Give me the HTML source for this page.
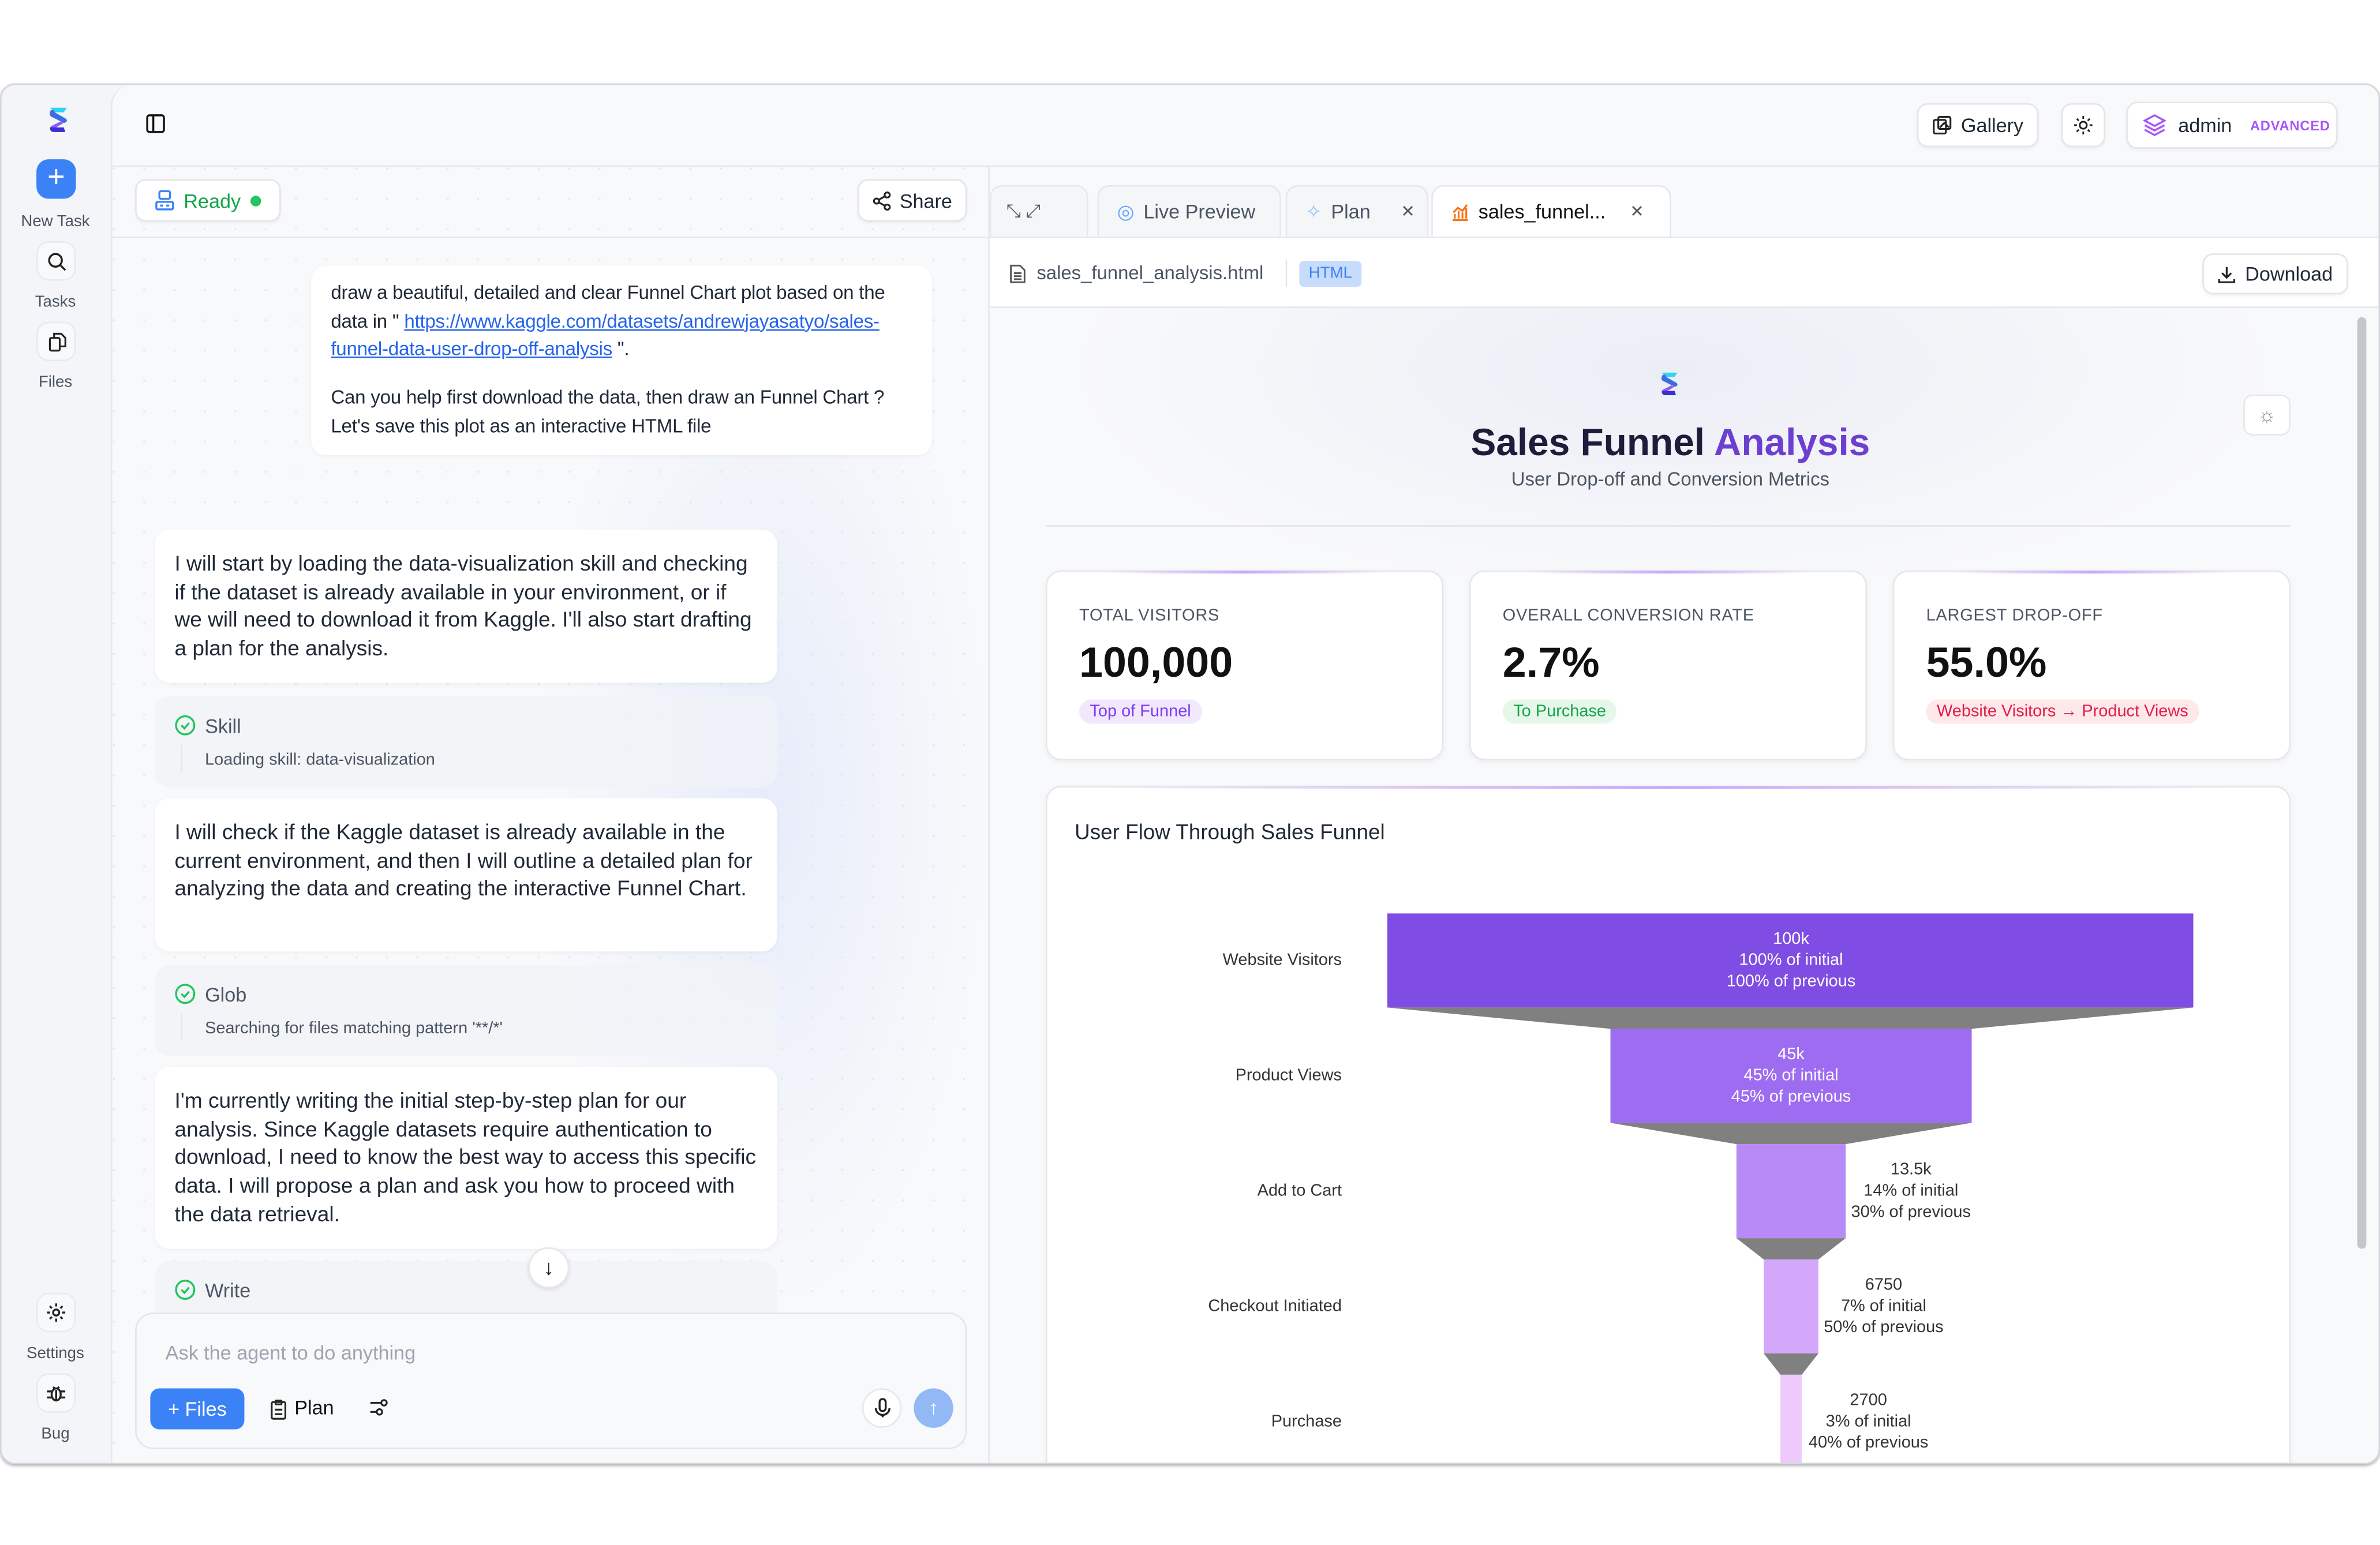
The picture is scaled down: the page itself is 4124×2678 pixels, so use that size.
<!DOCTYPE html>
<html><head><meta charset="utf-8">
<style>
*{box-sizing:border-box;margin:0;padding:0}
html,body{width:4124px;height:2678px;overflow:hidden;background:#fff}
#s{position:absolute;left:0;top:0;width:1568px;height:1018.3px;transform:scale(2.63010);transform-origin:0 0;font-family:"Liberation Sans",sans-serif;color:#111827}
.a{position:absolute}
.win{left:0;top:55px;width:1568px;height:910px;background:#f4f5f8;border:1px solid #d5d7dc;border-radius:10px;overflow:hidden;box-shadow:0 1px 2px rgba(0,0,0,.3)}
.main{left:72px;top:0;width:1496px;height:910px;background:#f8f9fb;border-left:1px solid #e5e7eb;border-top-left-radius:14px}
.sb-btn{width:26px;height:26px;border-radius:8px;border:1px solid #e8eaee;background:#f8f9fb;display:flex;align-items:center;justify-content:center}
.lbl{font-size:10.5px;color:#4b5563;text-align:center;width:73px}
.btn{background:#fff;border:1px solid #e3e5ea;border-radius:7px;display:flex;align-items:center;justify-content:center;gap:6px;font-size:13px;color:#1f2937;box-shadow:0 1px 2px rgba(0,0,0,.05)}
.bub{background:#fff;border-radius:10px;font-size:14.1px;line-height:18.7px;color:#1f2937;box-shadow:0 1px 3px rgba(0,0,0,.04)}
.tool{background:rgba(240,243,248,.8);border-radius:10px;font-size:12.5px;color:#4b5563}
.tab{top:66px;height:34px;border:1px solid #e5e7eb;border-bottom:none;border-radius:8px 8px 0 0;display:flex;align-items:center;gap:6px;font-size:13px;color:#4b5563;padding-left:12px;background:#f5f6f8}
.card{background:#fff;border:1px solid #e5e7eb;border-radius:10px;box-shadow:0 1px 4px rgba(0,0,0,.05)}
.card .t{position:absolute;left:21px;top:23px;font-size:11px;color:#4b5563;letter-spacing:.3px}
.card .v{position:absolute;left:21px;top:44px;font-size:28px;font-weight:bold;color:#111}
.card .p{position:absolute;left:21px;top:84px;font-size:11px;padding:2px 7px;border-radius:9px}
.card:before{content:"";position:absolute;left:40px;right:40px;top:-1px;height:2px;background:linear-gradient(90deg,transparent,#c9a8f5,transparent)}
.fl{font-size:11px;color:#333;text-align:right;width:150px}
.fv{font-size:11px;color:#333;text-align:center;line-height:14px}
</style></head><body><div id="s">
<div class="a win">
 <svg class="a" style="left:30px;top:14px" width="14" height="18" viewBox="0 0 14 18"><path d="M2 1h11l-2 3H5z" fill="#2dd4f5"/><path d="M2 4c0-2 3-2 3 0l7 4c2 1 1 3-1 3L3 7C1 6 2 4 2 4z" fill="#3b6fe0"/><path d="M12 9c0 2-3 2-3 1L3 13c-2 1-1 4 1 4h8l-1-3H6l5-3z" fill="#8b5cf6"/><path d="M2 14c0 2 1 3 3 3h7l-1-3H4z" fill="#3b2fd0"/></svg>
 <div class="a" style="left:23px;top:49px;width:26px;height:26px;border-radius:8px;background:#3b82f6;color:#fff;font-size:20px;line-height:25px;text-align:center">+</div>
 <div class="a lbl" style="left:-1px;top:84px">New Task</div>
 <div class="a sb-btn" style="left:23px;top:103px"><svg width="13" height="13" viewBox="0 0 14 14" fill="none" stroke="#222" stroke-width="1.4"><circle cx="6" cy="6" r="4.5"/><path d="M9.5 9.5L13 13"/></svg></div>
 <div class="a lbl" style="left:-1px;top:137px">Tasks</div>
 <div class="a sb-btn" style="left:23px;top:156px"><svg width="13" height="13" viewBox="0 0 14 14" fill="none" stroke="#222" stroke-width="1.3"><rect x="2" y="4" width="7" height="9" rx="1"/><path d="M5 4V1h5l3 3v6H9"/></svg></div>
 <div class="a lbl" style="left:-1px;top:190px">Files</div>
 <div class="a sb-btn" style="left:23px;top:796px"><svg width="14" height="14" viewBox="0 0 14 14" fill="none" stroke="#222" stroke-width="1.3"><circle cx="7" cy="7" r="2"/><path d="M7 1v2M7 11v2M1 7h2M11 7h2M2.8 2.8l1.4 1.4M9.8 9.8l1.4 1.4M2.8 11.2l1.4-1.4M9.8 4.2l1.4-1.4"/></svg></div>
 <div class="a lbl" style="left:-1px;top:830px">Settings</div>
 <div class="a sb-btn" style="left:23px;top:849px"><svg width="14" height="14" viewBox="0 0 14 14" fill="none" stroke="#222" stroke-width="1.3"><ellipse cx="7" cy="8" rx="3" ry="4"/><path d="M5 3l1 1M9 3l-1 1M1 6h3M10 6h3M1 10h3M10 10h3M7 5v7"/></svg></div>
 <div class="a lbl" style="left:-1px;top:883px">Bug</div>

 <div class="a main">
  <svg class="a" style="left:22px;top:19px" width="13" height="13" viewBox="0 0 13 13" fill="none" stroke="#111" stroke-width="1.3"><rect x="1" y="1" width="11" height="11" rx="1.5"/><path d="M5 1v11"/></svg>
  <div class="a btn" style="left:1189px;top:12px;width:80px;height:29px"><svg width="13" height="13" viewBox="0 0 13 13" fill="none" stroke="#222" stroke-width="1.2"><rect x="1" y="3" width="8" height="9" rx="1"/><rect x="4" y="1" width="8" height="8" rx="1"/><path d="M5 8l3-3 3 3"/></svg>Gallery</div>
  <div class="a btn" style="left:1284px;top:12px;width:29px;height:29px"><svg width="13" height="13" viewBox="0 0 14 14" fill="none" stroke="#222" stroke-width="1.2"><circle cx="7" cy="7" r="2.5"/><path d="M7 0.5v2M7 11.5v2M0.5 7h2M11.5 7h2M2.4 2.4l1.4 1.4M10.2 10.2l1.4 1.4M2.4 11.6l1.4-1.4M10.2 3.8l1.4-1.4"/></svg></div>
  <div class="a btn" style="left:1327px;top:11px;width:139px;height:31px;justify-content:flex-start;padding-left:10px;gap:8px"><svg width="15" height="15" viewBox="0 0 15 15" fill="none" stroke="#a855f7" stroke-width="1.3"><path d="M7.5 1L14 4.5 7.5 8 1 4.5z"/><path d="M1 7.5L7.5 11 14 7.5M1 10.5L7.5 14 14 10.5"/></svg>admin <span style="font-size:9px;font-weight:bold;color:#a855f7;margin-left:4px;letter-spacing:.3px">ADVANCED</span></div>
  <div class="a" style="left:0;top:53px;width:1496px;height:1px;background:#e5e7eb"></div>

  <div class="a" style="left:0;top:54px;width:577px;height:856px;background:radial-gradient(circle at 1px 1px,#e4e7ec 0.6px,transparent 0.8px) 0 0/20px 20px,#f8f9fb">
   <div class="a" style="left:0;top:46px;width:577px;height:1px;background:#e5e7eb"></div>
   <div class="a btn" style="left:15px;top:8px;width:96px;height:28px;justify-content:flex-start;padding-left:12px;color:#16a34a;font-size:13px"><svg width="13" height="14" viewBox="0 0 13 14" fill="none" stroke="#3b82f6" stroke-width="1.3"><rect x="3" y="1" width="7" height="5" rx="1"/><rect x="1" y="8" width="11" height="5" rx="1"/><path d="M3.5 10.5h2M7.5 10.5h2"/></svg>Ready <span style="width:7px;height:7px;border-radius:50%;background:#22c55e;display:inline-block"></span></div>
   <div class="a btn" style="left:491px;top:8px;width:72px;height:28px"><svg width="12" height="13" viewBox="0 0 12 13" fill="none" stroke="#222" stroke-width="1.2"><circle cx="9.5" cy="2.5" r="1.7"/><circle cx="2.5" cy="6.5" r="1.7"/><circle cx="9.5" cy="10.5" r="1.7"/><path d="M4 5.6l4-2.2M4 7.4l4 2.2"/></svg>Share</div>
   <div class="a" style="left:280px;top:60px;width:300px;height:700px;background:radial-gradient(ellipse at center,rgba(220,228,248,.6),transparent 70%)"></div>
   <div class="a bub" style="left:131px;top:65px;width:409px;height:125px;padding:9px 13px;font-size:12.6px;letter-spacing:-0.1px">draw a beautiful, detailed and clear Funnel Chart plot based on the data in " <span style="color:#2563eb;text-decoration:underline">https://www.kaggle.com/datasets/andrewjayasatyo/sales-funnel-data-user-drop-off-analysis</span> ".<div style="height:13px"></div>Can you help first download the data, then draw an Funnel Chart ? Let's save this plot as an interactive HTML file</div>
   <div class="a bub" style="left:28px;top:239px;width:410px;height:101px;padding:13px 13px">I will start by loading the data-visualization skill and checking if the dataset is already available in your environment, or if we will need to download it from Kaggle. I'll also start drafting a plan for the analysis.</div>
   <div class="a tool" style="left:28px;top:349px;width:410px;height:60px"><svg class="a" style="left:13px;top:12px" width="14" height="14" viewBox="0 0 14 14" fill="none" stroke="#22c55e" stroke-width="1.3"><circle cx="7" cy="7" r="6"/><path d="M4.5 7l2 2 3-3.5"/></svg><div class="a" style="left:33px;top:12px;font-size:13px">Skill</div><div class="a" style="left:17px;top:32px;width:1px;height:18px;background:#e5e7eb"></div><div class="a" style="left:33px;top:36px;font-size:11px">Loading skill: data-visualization</div></div>
   <div class="a bub" style="left:28px;top:416px;width:410px;height:101px;padding:13px 13px">I will check if the Kaggle dataset is already available in the current environment, and then I will outline a detailed plan for analyzing the data and creating the interactive Funnel Chart.</div>
   <div class="a tool" style="left:28px;top:526px;width:410px;height:60px"><svg class="a" style="left:13px;top:12px" width="14" height="14" viewBox="0 0 14 14" fill="none" stroke="#22c55e" stroke-width="1.3"><circle cx="7" cy="7" r="6"/><path d="M4.5 7l2 2 3-3.5"/></svg><div class="a" style="left:33px;top:12px;font-size:13px">Glob</div><div class="a" style="left:17px;top:32px;width:1px;height:18px;background:#e5e7eb"></div><div class="a" style="left:33px;top:36px;font-size:11px">Searching for files matching pattern '**/*'</div></div>
   <div class="a bub" style="left:28px;top:593px;width:410px;height:120px;padding:13px 13px">I'm currently writing the initial step-by-step plan for our analysis. Since Kaggle datasets require authentication to download, I need to know the best way to access this specific data. I will propose a plan and ask you how to proceed with the data retrieval.</div>
   <div class="a tool" style="left:28px;top:721px;width:410px;height:40px"><svg class="a" style="left:13px;top:12px" width="14" height="14" viewBox="0 0 14 14" fill="none" stroke="#22c55e" stroke-width="1.3"><circle cx="7" cy="7" r="6"/><path d="M4.5 7l2 2 3-3.5"/></svg><div class="a" style="left:33px;top:12px;font-size:13px">Write</div></div>
   <div class="a" style="left:274px;top:712px;width:27px;height:27px;border-radius:50%;background:#fff;border:1px solid #e5e7eb;box-shadow:0 1px 3px rgba(0,0,0,.1);text-align:center;font-size:14px;line-height:25px">↓</div>
   <div class="a" style="left:15px;top:755px;width:548px;height:90px;background:#f8f9fb;border:1px solid #e3e5ea;border-radius:12px">
    <div class="a" style="left:19px;top:18px;font-size:13px;color:#9ca3af">Ask the agent to do anything</div>
    <div class="a" style="left:9px;top:49px;width:62px;height:27px;border-radius:6px;background:#3b82f6;color:#fff;font-size:13px;line-height:27px;text-align:center">+ Files</div>
    <svg class="a" style="left:88px;top:56px" width="11" height="14" viewBox="0 0 11 14" fill="none" stroke="#222" stroke-width="1.2"><rect x="1" y="2" width="9" height="11" rx="1"/><rect x="3.5" y="1" width="4" height="2.5" rx=".5"/><path d="M3 7h5M3 10h5"/></svg>
    <div class="a" style="left:104px;top:54px;font-size:13px;color:#111">Plan</div>
    <svg class="a" style="left:153px;top:55px" width="13" height="13" viewBox="0 0 13 13" fill="none" stroke="#222" stroke-width="1.2"><path d="M1 3.5h7M1 9.5h4"/><circle cx="10" cy="3.5" r="1.8"/><circle cx="7" cy="9.5" r="1.8"/></svg>
    <div class="a" style="left:478px;top:49px;width:26px;height:26px;border-radius:50%;background:#fff;border:1px solid #e5e7eb"><svg class="a" style="left:7px;top:5px" width="11" height="14" viewBox="0 0 11 14" fill="none" stroke="#222" stroke-width="1.3"><rect x="3.5" y="1" width="4" height="8" rx="2"/><path d="M1 7a4.5 4.5 0 009 0M5.5 11.5V13"/></svg></div>
    <div class="a" style="left:512px;top:49px;width:26px;height:26px;border-radius:50%;background:#93b8f6;color:#fff;text-align:center;font-size:13px;line-height:26px">↑</div>
   </div>
  </div>

  <div class="a" style="left:577px;top:54px;width:1px;height:856px;background:#e5e7eb"></div>
  <div class="a" style="left:575px;top:499px;font-size:8px;color:#666">⋮</div>
  <div class="a tab" style="left:578px;width:65px;padding-left:10px;gap:20px;font-size:12px">⤡ ⤢</div>
  <div class="a tab" style="left:649px;width:121px"><span style="color:#60a5fa">◎</span> Live Preview</div>
  <div class="a tab" style="left:773px;width:94px"><span style="color:#93c5fd">✧</span> Plan <span style="margin-left:14px;font-size:11px">✕</span></div>
  <div class="a tab" style="left:869px;width:158px;background:#fff;color:#111"><svg width="12" height="12" viewBox="0 0 12 12" fill="none" stroke="#f97316" stroke-width="1.2"><path d="M1 11h10M2.5 10V7M5 10V5M7.5 10V6M10 10V3M1.5 6l3-3 3 2 3-4"/></svg> sales_funnel... <span style="margin-left:10px;font-size:11px;color:#555">✕</span></div>
  <div class="a" style="left:578px;top:100px;width:918px;height:47px;background:#fff;border-top:1px solid #e5e7eb;border-bottom:1px solid #e5e7eb">
   <svg class="a" style="left:13px;top:17px" width="11" height="13" viewBox="0 0 11 13" fill="none" stroke="#555" stroke-width="1.1"><path d="M1 1h6l3 3v8H1z"/><path d="M3 6h5M3 8h5M3 10h5"/></svg>
   <div class="a" style="left:31px;top:16px;font-size:12.5px;color:#4b5563">sales_funnel_analysis.html</div>
   <div class="a" style="left:195px;top:14px;width:1px;height:18px;background:#e5e7eb"></div>
   <div class="a" style="left:204px;top:15px;width:41px;height:17px;border-radius:3px;background:#c7dbfb;color:#3b82f6;font-size:10.5px;text-align:center;line-height:17px">HTML</div>
   <div class="a btn" style="left:799px;top:10px;width:96px;height:27px"><svg width="12" height="12" viewBox="0 0 12 12" fill="none" stroke="#222" stroke-width="1.2"><path d="M6 1v7M3 5l3 3 3-3M1 9v2h10V9"/></svg>Download</div>
  </div>
  <div class="a" style="left:578px;top:147px;width:897px;height:763px;background:radial-gradient(ellipse 400px 150px at 450px 40px,#eceef6,transparent),#f8f9fb;overflow:hidden">
   <svg class="a" style="left:441px;top:41px" width="13" height="18" viewBox="0 0 14 18"><path d="M2 1h11l-2 3H5z" fill="#2dd4f5"/><path d="M2 4c0-2 3-2 3 0l7 4c2 1 1 3-1 3L3 7C1 6 2 4 2 4z" fill="#3b6fe0"/><path d="M12 9c0 2-3 2-3 1L3 13c-2 1-1 4 1 4h8l-1-3H6l5-3z" fill="#8b5cf6"/><path d="M2 14c0 2 1 3 3 3h7l-1-3H4z" fill="#3b2fd0"/></svg>
   <div class="a" style="left:0;width:897px;top:75px;text-align:center;font-size:25px;font-weight:bold;color:#1f1b3a">Sales Funnel <span style="color:#6d3fd1">Analysis</span></div>
   <div class="a" style="left:0;width:897px;top:106px;text-align:center;font-size:12.5px;color:#4b5563">User Drop-off and Conversion Metrics</div>
   <div class="a" style="left:826px;top:57px;width:31px;height:27px;border:1px solid #e5e7eb;border-radius:6px;background:#fff;text-align:center;font-size:13px;line-height:25px;color:#888">☼</div>
   <div class="a" style="left:37px;top:143px;width:820px;height:1px;background:#e2e4e8"></div>
   <div class="a card" style="left:37px;top:173px;width:262px;height:125px"><div class="t">TOTAL VISITORS</div><div class="v">100,000</div><div class="p" style="background:#f1e8fe;color:#7c3aed">Top of Funnel</div></div>
   <div class="a card" style="left:316px;top:173px;width:262px;height:125px"><div class="t">OVERALL CONVERSION RATE</div><div class="v">2.7%</div><div class="p" style="background:#e6f7ea;color:#16a34a">To Purchase</div></div>
   <div class="a card" style="left:595px;top:173px;width:262px;height:125px"><div class="t">LARGEST DROP-OFF</div><div class="v">55.0%</div><div class="p" style="background:#fde8ea;color:#e11d48">Website Visitors → Product Views</div></div>
   <div class="a card" style="left:37px;top:315px;width:820px;height:470px">
    <div class="a" style="left:18px;top:21px;font-size:14px;color:#1f2937">User Flow Through Sales Funnel</div>
   </div>
   <svg class="a" style="left:0;top:0" width="897" height="763" viewBox="650 202 897 763">
    <rect x="912" y="601" width="531" height="62" fill="#7f4de3"/>
    <polygon points="912,663 1443,663 1297,677 1059,677" fill="#808080"/>
    <rect x="1059" y="677" width="238" height="62" fill="#9d6cf0"/>
    <polygon points="1059,739 1297,739 1214,753 1142,753" fill="#808080"/>
    <rect x="1142" y="753" width="72" height="62" fill="#b78af6"/>
    <polygon points="1142,815 1214,815 1196,829 1160,829" fill="#808080"/>
    <rect x="1160" y="829" width="36" height="62" fill="#d3a8fb"/>
    <polygon points="1160,891 1196,891 1185,905 1171,905" fill="#808080"/>
    <rect x="1171" y="905" width="14" height="70" fill="#eec9fc"/>
   </svg>
   <div class="a fl" style="left:82px;top:424px">Website Visitors</div>
   <div class="a fl" style="left:82px;top:500px">Product Views</div>
   <div class="a fl" style="left:82px;top:576px">Add to Cart</div>
   <div class="a fl" style="left:82px;top:652px">Checkout Initiated</div>
   <div class="a fl" style="left:82px;top:728px">Purchase</div>
   <div class="a fv" style="left:428px;width:200px;top:409px;color:#fff">100k<br>100% of initial<br>100% of previous</div>
   <div class="a fv" style="left:428px;width:200px;top:485px;color:#fff">45k<br>45% of initial<br>45% of previous</div>
   <div class="a fv" style="left:557px;width:100px;top:561px">13.5k<br>14% of initial<br>30% of previous</div>
   <div class="a fv" style="left:539px;width:100px;top:637px">6750<br>7% of initial<br>50% of previous</div>
   <div class="a fv" style="left:529px;width:100px;top:713px">2700<br>3% of initial<br>40% of previous</div>
  </div>
  <div class="a" style="left:1475px;top:147px;width:21px;height:763px;background:#f8f9fb"><div class="a" style="left:4px;top:6px;width:6px;height:614px;border-radius:3px;background:#c4c6ca"></div></div>
 </div>
</div>
</div></body></html>
